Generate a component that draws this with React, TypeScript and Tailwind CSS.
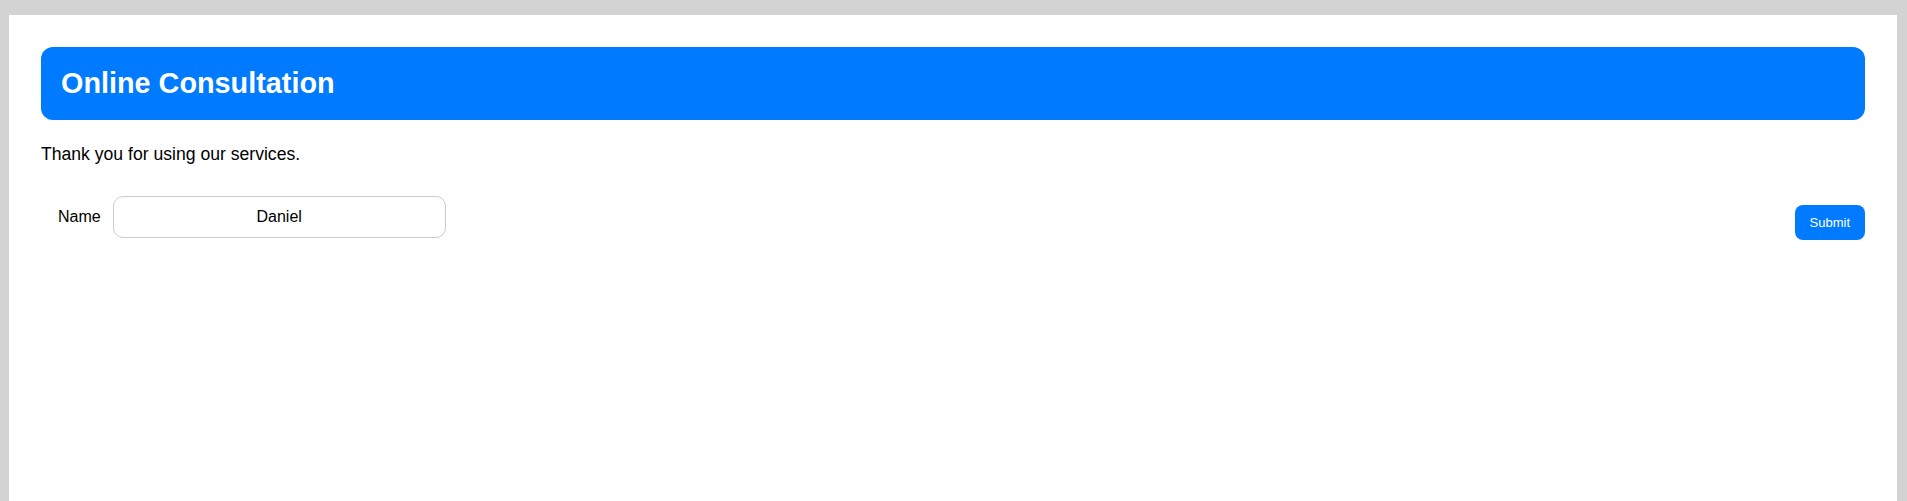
export default function App() {
  return (
    <div className="min-h-screen bg-[#d3d3d3] pl-[9px] pr-[10px] pt-[15px] font-['Liberation_Sans',Arial,sans-serif] text-black">
      <div className="min-h-[486px] bg-white p-8">
        <header className="rounded-xl bg-[#007bff] px-5 py-5">
          <h1 className="text-[28.8px] font-bold leading-[33px] text-white">Online Consultation</h1>
        </header>

        <p className="mt-6 text-[17.6px] leading-[20px]">Thank you for using our services.</p>

        <form className="mt-8 flex items-start justify-between pl-[17px]" onSubmit={(e) => e.preventDefault()}>
          <div className="flex items-center">
            <label htmlFor="name" className="text-base">
              Name
            </label>
            <input
              id="name"
              readOnly
              value="Daniel"
              className="ml-[12px] h-[42px] w-[333px] rounded-[10px] border border-[#cccccc] text-center text-base outline-none"
            />
          </div>
          <button
            type="submit"
            className="mt-[9px] h-[35px] rounded-lg bg-[#007bff] px-[15px] text-[13px] text-white"
          >
            Submit
          </button>
        </form>
      </div>
    </div>
  );
}
